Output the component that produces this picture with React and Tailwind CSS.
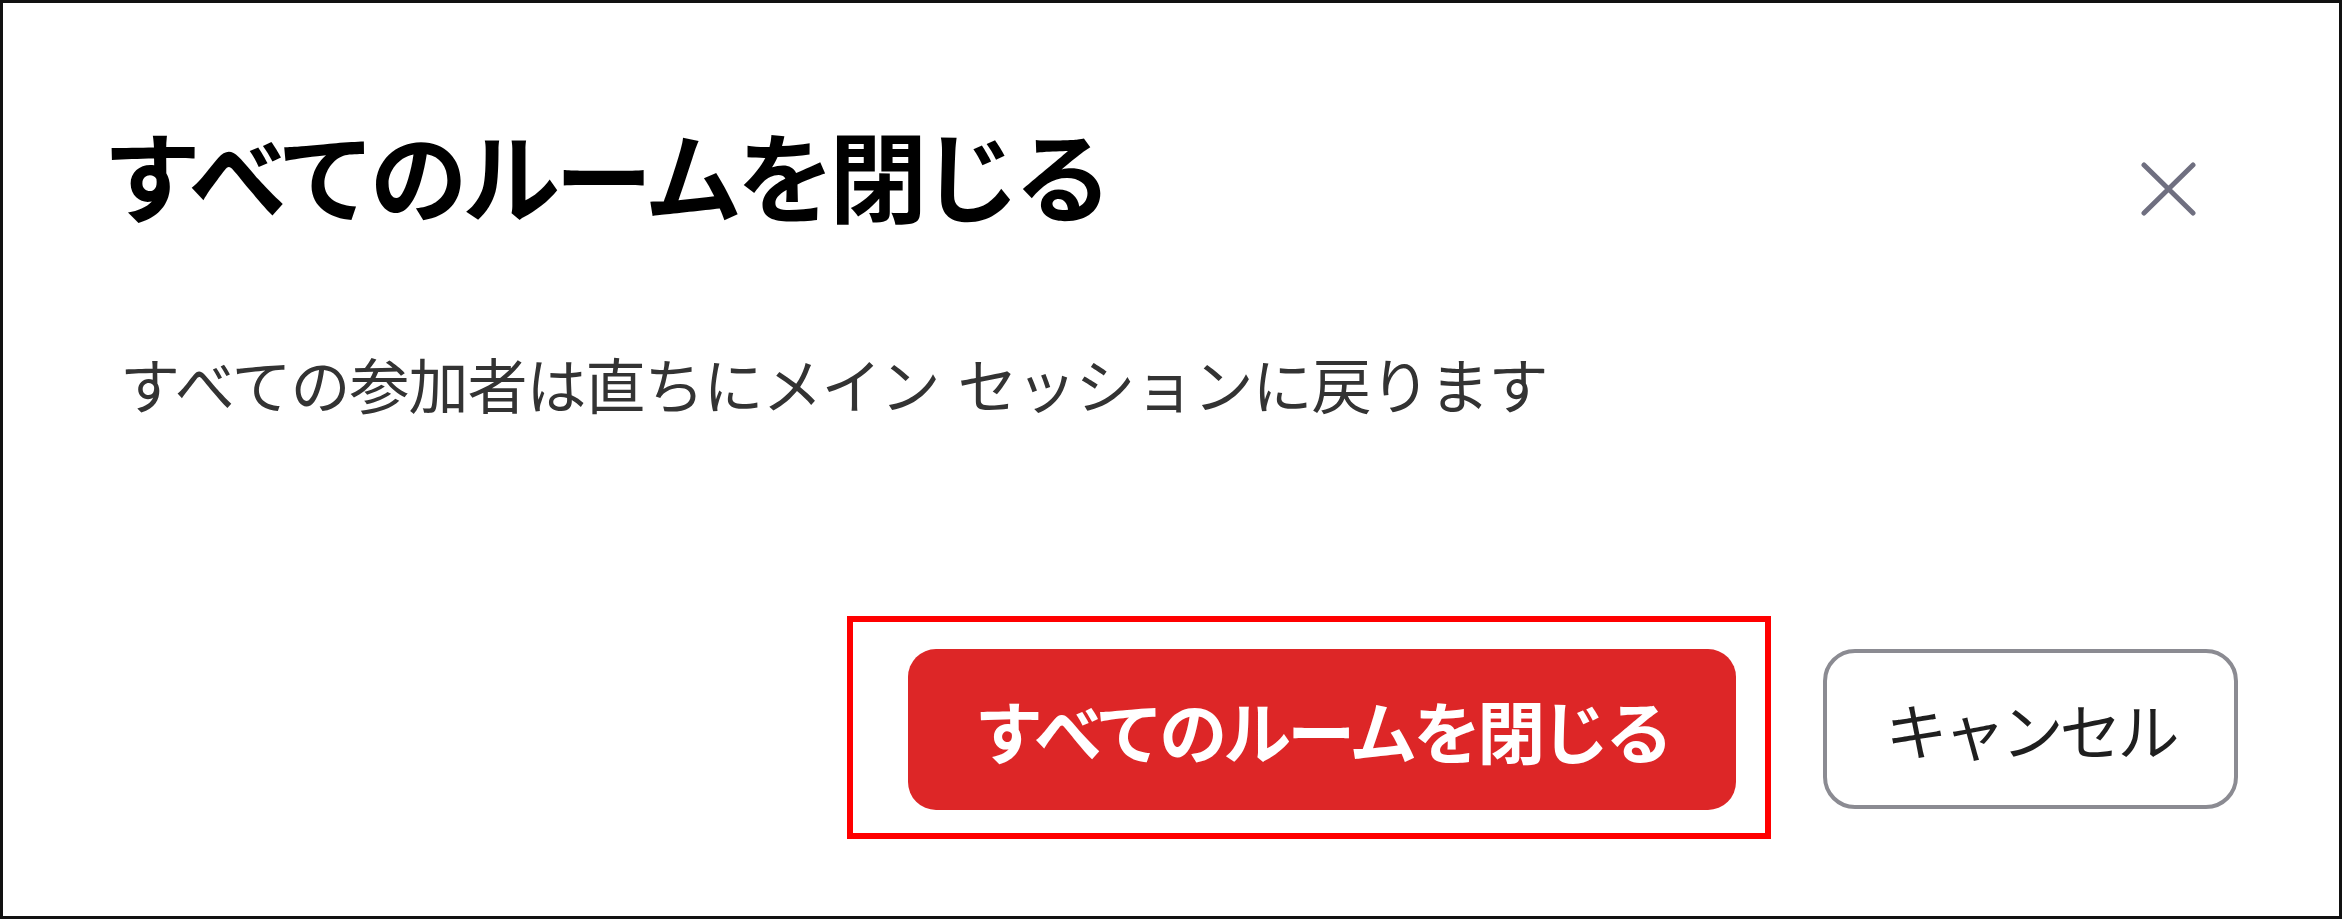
import React from 'react';

const CloseIcon = () => (
    <svg width="55" height="54" viewBox="0 0 55 54" fill="none">
        <path d="M3 3 L52 51 M52 3 L3 51" stroke="#6f6f80" strokeWidth="5" strokeLinecap="round" />
    </svg>
);

const App = () => {
    return (
        <div
            className="w-[2342px] h-[919px] bg-white border-[3px] border-[#111] flex flex-col"
            style={{ fontFamily: '"Noto Sans CJK JP", "Noto Sans", sans-serif' }}
        >
            {/* ヘッダー */}
            <div className="flex items-start justify-between pl-[100px] pr-[143px] pt-[120px]">
                <h1 className="text-[98px] leading-none font-bold tracking-[-5.5px] text-black">
                    すべてのルームを閉じる
                </h1>
                <button className="mt-[39px]">
                    <CloseIcon />
                </button>
            </div>

            {/* 本文 */}
            <p className="mt-[132px] pl-[117px] text-[60px] leading-none tracking-[-1px] text-[#333]">
                すべての参加者は直ちにメイン<span className="inline-block w-[18px]" />セッションに戻ります
            </p>

            {/* ボタン */}
            <div className="mt-[203px] flex items-start justify-end pr-[101px]">
                <div className="border-[6px] border-[#ff0000] pl-[55px] pr-[29px] pt-[27px] pb-[23px]">
                    <button className="w-[828px] h-[161px] rounded-[28px] bg-[#dd2627] text-white text-[68px] font-bold leading-none tracking-[-4px] flex items-center justify-center">
                        すべてのルームを閉じる
                    </button>
                </div>
                <button className="ml-[52px] mt-[33px] w-[415px] h-[160px] rounded-[32px] border-4 border-[#8b8b92] bg-white text-[62px] leading-none tracking-[-4px] text-[#1f1f1f] flex items-center justify-center">
                    キャンセル
                </button>
            </div>
        </div>
    );
};

export default App;
